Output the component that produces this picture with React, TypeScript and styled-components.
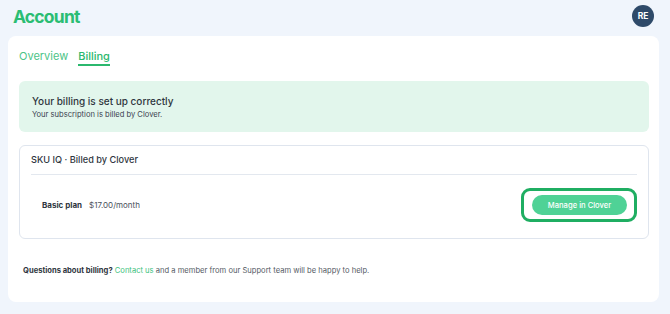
import styled, { createGlobalStyle } from "styled-components";

const GlobalStyle = createGlobalStyle`
  html, body {
    margin: 0;
    padding: 0;
    background: #f0f5fc;
    font-family: Inter, "Noto Sans", sans-serif;
  }
`;

const Page = styled.div`
  width: 670px;
  height: 314px;
  box-sizing: border-box;
  padding: 4px 11px 12px 8px;
  display: flex;
  flex-direction: column;
`;

const Header = styled.header`
  display: flex;
  align-items: center;
  justify-content: space-between;
  height: 24px;
  padding-left: 5px;
  margin-bottom: 8px;
`;

const Title = styled.h1`
  margin: 0;
  font-size: 17.5px;
  font-weight: 700;
  letter-spacing: -0.8px;
  color: #2bbd73;
`;

const Avatar = styled.div`
  width: 22px;
  height: 22px;
  border-radius: 50%;
  background: #2e4a69;
  color: #fff;
  font-size: 8.5px;
  font-weight: 700;
  display: flex;
  align-items: center;
  justify-content: center;
  margin-right: 5px;
`;

const Card = styled.main`
  flex: 1;
  background: #fff;
  border-radius: 8px;
  padding: 10px 10px 0 11px;
  display: flex;
  flex-direction: column;
`;

const Tabs = styled.nav`
  display: flex;
  gap: 10px;
  height: 28px;
  align-items: flex-start;
`;

const Tab = styled.span<{ $active?: boolean }>`
  font-size: 11px;
  color: ${(p) => (p.$active ? "#2bb86e" : "#4cc487")};
  font-weight: ${(p) => (p.$active ? 500 : 400)};
  line-height: 16px;
  padding-top: 2px;
  border-bottom: 2px solid ${(p) => (p.$active ? "#2bb86e" : "transparent")};
`;

const Banner = styled.section`
  margin-top: 7px;
  background: #e2f6ec;
  border-radius: 6px;
  padding: 13px 13px 12px;
`;

const BannerTitle = styled.div`
  font-size: 10px;
  font-weight: 500;
  color: #2f3640;
  line-height: 14px;
`;

const BannerText = styled.div`
  font-size: 7.6px;
  line-height: 10px;
  color: #3b4250;
  margin-top: 2px;
`;

const Plan = styled.section`
  margin-top: 13px;
  border: 1px solid #dfe5ee;
  border-radius: 6px;
  padding: 0 11px;
`;

const PlanHead = styled.div`
  font-size: 9.2px;
  font-weight: 500;
  color: #2f3640;
  height: 28px;
  line-height: 28px;
  border-bottom: 1px solid #e3e8ef;
`;

const PlanRow = styled.div`
  display: flex;
  align-items: center;
  justify-content: space-between;
  height: 63px;
  box-sizing: border-box;
  padding: 0 0 3px 11px;
`;

const PlanInfo = styled.div`
  display: flex;
  gap: 7px;
  font-size: 8px;
  color: #4a505a;
`;

const PlanName = styled.span`
  font-weight: 700;
  color: #2f3640;
`;

const FocusRing = styled.div`
  border: 3px solid #1fae62;
  border-radius: 9px;
  padding: 4px 7px 4px 8px;
`;

const Button = styled.button`
  display: block;
  border: none;
  background: #4fd296;
  color: #fff;
  font-family: inherit;
  font-size: 7.6px;
  font-weight: 500;
  width: 95px;
  height: 20px;
  border-radius: 10px;
  cursor: pointer;
`;

const Footer = styled.p`
  margin: 27px 0 0 4px;
  font-size: 7.6px;
  line-height: 10px;
  color: #555b65;
`;

const Strong = styled.strong`
  color: #2f3640;
  font-weight: 700;
`;

const Link = styled.a`
  color: #3cc27e;
  text-decoration: none;
`;

export default function App() {
  return (
    <>
      <GlobalStyle />
      <Page>
        <Header>
          <Title>Account</Title>
          <Avatar>RE</Avatar>
        </Header>
        <Card>
          <Tabs>
            <Tab>Overview</Tab>
            <Tab $active>Billing</Tab>
          </Tabs>
          <Banner>
            <BannerTitle>Your billing is set up correctly</BannerTitle>
            <BannerText>Your subscription is billed by Clover.</BannerText>
          </Banner>
          <Plan>
            <PlanHead>SKU IQ · Billed by Clover</PlanHead>
            <PlanRow>
              <PlanInfo>
                <PlanName>Basic plan</PlanName>
                <span>$17.00/month</span>
              </PlanInfo>
              <FocusRing>
                <Button>Manage in Clover</Button>
              </FocusRing>
            </PlanRow>
          </Plan>
          <Footer>
            <Strong>Questions about billing?</Strong>{" "}
            <Link href="#">Contact us</Link> and a member from our Support team
            will be happy to help.
          </Footer>
        </Card>
      </Page>
    </>
  );
}
